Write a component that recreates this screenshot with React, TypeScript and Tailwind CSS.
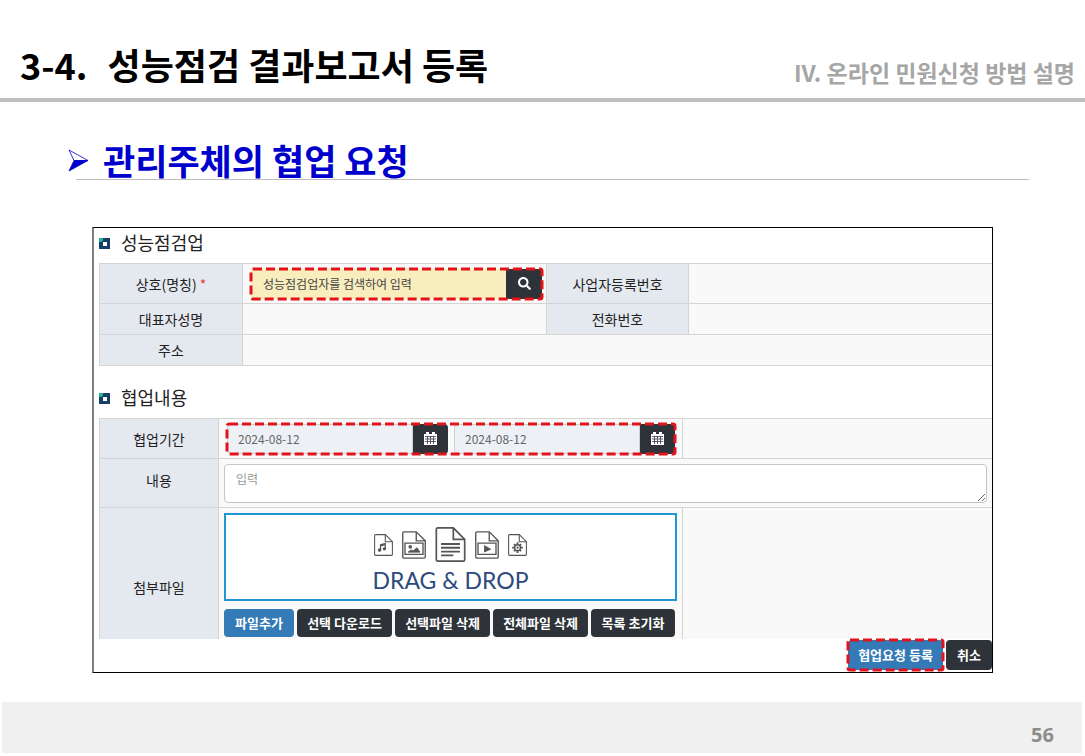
import type { ReactNode } from "react";
import { FaSearch } from "react-icons/fa";

const FILE_ACTIONS = [
  { id: "download", label: "선택 다운로드", width: "w-[95px]" },
  { id: "remove", label: "선택파일 삭제", width: "w-[95px]" },
  { id: "remove-all", label: "전체파일 삭제", width: "w-[95px]" },
  { id: "reset", label: "목록 초기화", width: "w-[84px]" },
];

const TH = "bg-[#e4e9f0] border border-[#d4d4d4] font-normal text-center text-[#222]";
const TD = "bg-[#f9f9f9] border border-[#d4d4d4] border-r-0";

export default function App() {
  return (
    <div className="flex min-h-screen flex-col bg-white font-['Noto_Sans_CJK_KR',sans-serif] text-[#222]">
      <header className="flex h-[102px] items-center justify-between border-b-4 border-[#bfbfbf] pt-[30px] pl-5 pr-[10px]">
        <h1 className="flex gap-5 text-4xl leading-10 font-bold text-black">
          <span>3-4.</span>
          <span>성능점검 결과보고서 등록</span>
        </h1>
        <p className="pt-4 text-[23px] leading-8 font-bold text-[#a6a6a6]">IV. 온라인 민원신청 방법 설명</p>
      </header>

      <main className="flex-1 pb-[29px]">
        <div className="mt-[34px] mr-14 ml-[76px] flex h-11 items-center gap-[14px] border-b border-[#bfbfbf] pt-[5px]">
          <ArrowBullet />
          <h2 className="text-[35px] leading-10 font-bold text-[#0000cc]">관리주체의 협업 요청</h2>
        </div>

        <form
          className="mt-[47px] mr-[92px] ml-[92px] border border-l-2 border-black border-l-[#7f7f7f] pb-[2px]"
          onSubmit={(e) => e.preventDefault()}
        >
          <div className="pl-[5px]">
            <SectionTitle>성능점검업</SectionTitle>
            <table className="w-full table-fixed border-collapse text-sm">
              <colgroup>
                <col className="w-[143px]" />
                <col className="w-[304px]" />
                <col className="w-[142px]" />
                <col />
              </colgroup>
              <tbody>
                <tr className="h-10">
                  <th scope="row" className={TH}>
                    <label htmlFor="company">
                      상호(명칭) <span className="text-[#e2403a]">*</span>
                    </label>
                  </th>
                  <td className={`${TD} py-0 pr-1 pl-2`}>
                    <Highlight>
                      <input
                        id="company"
                        type="text"
                        placeholder="성능점검업자를 검색하여 입력"
                        className="h-full min-w-0 flex-1 bg-[#f8edbd] px-3 text-xs placeholder:text-[#444]"
                      />
                      <button type="button" aria-label="검색" className="flex h-full w-9 items-center justify-center rounded-r bg-[#2d3339] text-white">
                        <FaSearch size={13} />
                      </button>
                    </Highlight>
                  </td>
                  <th scope="row" className={TH}>사업자등록번호</th>
                  <td className={TD} />
                </tr>
                <tr className="h-[31px]">
                  <th scope="row" className={TH}>대표자성명</th>
                  <td className={TD} />
                  <th scope="row" className={TH}>전화번호</th>
                  <td className={TD} />
                </tr>
                <tr className="h-[31px]">
                  <th scope="row" className={TH}>주소</th>
                  <td colSpan={3} className={TD} />
                </tr>
              </tbody>
            </table>

            <div className="h-[17px]" />
            <SectionTitle>협업내용</SectionTitle>
            <table className="w-full table-fixed border-collapse text-sm">
              <colgroup>
                <col className="w-[119px]" />
                <col className="w-[464px]" />
                <col />
              </colgroup>
              <tbody>
                <tr className="h-10">
                  <th scope="row" className={TH}>협업기간</th>
                  <td className={`${TD} py-0 pr-[7px] pl-2`}>
                    <Highlight>
                      <DateField id="start" label="시작일" />
                      <div className="w-[6px]" />
                      <DateField id="end" label="종료일" />
                    </Highlight>
                  </td>
                  <td className={TD} />
                </tr>
                <tr className="h-[49px]">
                  <th scope="row" className={`${TH} pb-[6px]`}>
                    <label htmlFor="content">내용</label>
                  </th>
                  <td colSpan={2} className={`${TD} px-[5px] py-0`}>
                    <textarea
                      id="content"
                      placeholder="입력"
                      className="block h-[39px] w-full rounded border border-[#c4c6cc] bg-white px-[11px] py-[6px] text-xs placeholder:text-[#999]"
                    />
                  </td>
                </tr>
                <tr className="h-[131px]">
                  <th scope="row" className={`${TH} border-b-0 pt-7`}>첨부파일</th>
                  <td className={`${TD} border-b-0 px-[5px] pt-[5px] pb-px align-top`}>
                    <DropZone />
                    <div className="mt-2 flex gap-[3px]">
                      <ActionButton primary className="h-7 w-[70px]">파일추가</ActionButton>
                      {FILE_ACTIONS.map((a) => (
                        <ActionButton key={a.id} className={`h-7 ${a.width}`}>{a.label}</ActionButton>
                      ))}
                    </div>
                  </td>
                  <td className={`${TD} border-b-0`} />
                </tr>
              </tbody>
            </table>
          </div>

          <div className="flex justify-end gap-[3px] pt-px">
            <div className="relative">
              <ActionButton primary className="block h-[30px] w-[95px]">협업요청 등록</ActionButton>
              <DashedFrame />
            </div>
            <ActionButton className="h-[30px] w-[46px]">취소</ActionButton>
          </div>
        </form>
      </main>

      <footer className="mr-[3px] mb-[3px] ml-[2px] flex h-[51px] items-end justify-end bg-[#f0f0f0] pr-7 pb-1">
        <span className="font-['Noto_Sans',sans-serif] text-xl leading-7 font-bold text-[#8c8c8c]">56</span>
      </footer>
    </div>
  );
}

function SectionTitle({ children }: { children: ReactNode }) {
  return (
    <h3 className="flex h-[35px] items-center gap-[11px] pb-1 text-lg leading-6 text-[#222]">
      <svg width="11" height="11" viewBox="0 0 11 11" aria-hidden="true">
        <rect width="11" height="11" fill="#153f66" />
        <path d="M0 0h4v3H3v1H0z" fill="#1fb393" />
        <rect x="4" y="4" width="4" height="4" fill="#fff" />
      </svg>
      <span className="pb-[3px]">{children}</span>
    </h3>
  );
}

// Input group with the red dashed call-out on top
function Highlight({ children }: { children: ReactNode }) {
  return (
    <div className="relative flex h-[30px] items-center">
      {children}
      <DashedFrame />
    </div>
  );
}

function DashedFrame() {
  return (
    <svg className="pointer-events-none absolute inset-0 h-full w-full overflow-visible" aria-hidden="true">
      <rect width="100%" height="100%" rx="2" fill="none" stroke="#e3131b" strokeWidth="3" strokeDasharray="9 4" />
    </svg>
  );
}

function DateField({ id, label }: { id: string; label: string }) {
  return (
    <div className="flex h-full min-w-0 flex-1">
      <input
        id={id}
        type="text"
        aria-label={label}
        defaultValue="2024-08-12"
        className="h-full min-w-0 flex-1 rounded-l border border-[#ccd0d6] bg-[#edf0f5] px-[10px] text-xs text-[#666]"
      />
      <button type="button" aria-label={`${label} 선택`} className="flex w-[35px] items-center justify-center rounded-r bg-[#2d3339]">
        <CalendarIcon />
      </button>
    </div>
  );
}

function ActionButton({ primary, className, children }: { primary?: boolean; className: string; children: ReactNode }) {
  return (
    <button
      type="button"
      className={`${className} rounded text-[13px] leading-5 font-bold whitespace-nowrap text-white ${primary ? "bg-[#337ab7]" : "bg-[#2d3339]"}`}
    >
      {children}
    </button>
  );
}

function DropZone() {
  return (
    <label className="flex h-[88px] flex-col items-center border-2 border-[#2196d3] bg-white pt-3">
      <input type="file" multiple className="sr-only" />
      <span className="flex h-[35px] items-center gap-[9px] text-[#555]">
        <FileIcon width={19} height={22}>
          <path d="M11 27V18l8-2v9M11 20l8-2" strokeWidth="2" />
          <circle cx="9.5" cy="27" r="2" fill="currentColor" />
          <circle cx="17.5" cy="25" r="2" fill="currentColor" />
        </FileIcon>
        <FileIcon width={24} height={28}>
          <path d="M4 16h24v15H4z" />
          <circle cx="11" cy="21" r="1.5" fill="currentColor" />
          <path d="M8 28l4-3 3 1 5-4 4 6z" fill="currentColor" strokeWidth="1" />
        </FileIcon>
        <FileIcon width={31} height={35}>
          <path d="M6 18h20M6 22h20M6 26h20M6 30h13" strokeWidth="2" />
        </FileIcon>
        <FileIcon width={24} height={28}>
          <path d="M4 16h24v15H4z" />
          <path d="M13 20v7l7-3z" fill="currentColor" />
        </FileIcon>
        <FileIcon width={19} height={22}>
          <circle cx="16" cy="23" r="5" strokeWidth="2.5" />
          <circle cx="16" cy="23" r="1" />
          <path d="M16 14v4M16 28v4M7 23h4M21 23h4M10 17l2 2M20 27l2 2M10 29l2-2M20 19l2-2" strokeWidth="3" />
        </FileIcon>
      </span>
      <span className="mt-1 font-[Lato,sans-serif] text-[23px] leading-7 text-[#2c4a7c]">DRAG &amp; DROP</span>
    </label>
  );
}

function FileIcon({ width, height, children }: { width: number; height: number; children: ReactNode }) {
  return (
    <svg width={width} height={height} viewBox="0 0 32 37" fill="none" stroke="currentColor" strokeWidth="1.8" aria-hidden="true">
      <path d="M1 2.5Q1 1 2.5 1H19l12 12v21.5Q31 36 29.5 36h-27Q1 36 1 34.5z" />
      <path d="M19 1v12h12" />
      {children}
    </svg>
  );
}

function CalendarIcon() {
  return (
    <svg width="13" height="13" viewBox="0 0 13 13" aria-hidden="true">
      <path d="M2 0h3v2h3V0h3v2h2v11H0V2h2z" fill="#fff" />
      <path d="M1 4.500h11M1 7h11M1 9.500h11M3.500 4.500V12M6.500 4.500V12M9.500 4.500V12" stroke="#3d3350" strokeWidth="0.8" />
    </svg>
  );
}

function ArrowBullet() {
  return (
    <svg className="-ml-2 flex-none" width="21" height="23" viewBox="0 0 21 23" aria-hidden="true">
      <path d="M1 1l19 10.500H6z" fill="#fff" stroke="#0000cc" strokeWidth="0.8" />
      <path d="M6 11.500h14L1 22z" fill="#0000cc" stroke="#0000cc" strokeWidth="0.8" />
    </svg>
  );
}
